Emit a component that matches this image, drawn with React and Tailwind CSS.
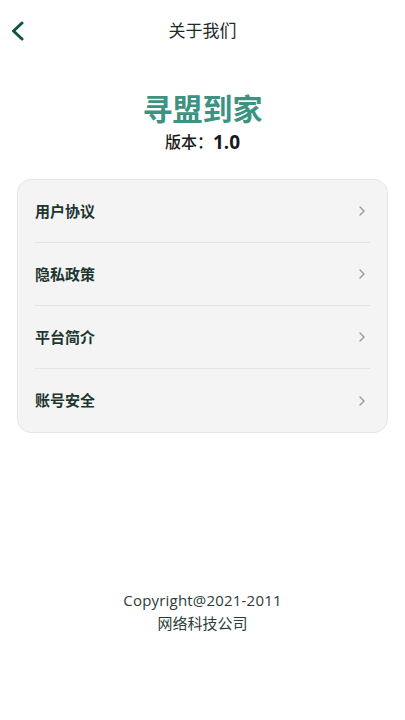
import React from "react";

const items = ["用户协议", "隐私政策", "平台简介", "账号安全"];

function Chevron() {
  return (
    <svg width="8" height="12" viewBox="0 0 8 12" fill="none">
      <path d="M2 2l4 4-4 4" stroke="#9a9a9a" strokeWidth="1.4" strokeLinecap="round" strokeLinejoin="round" />
    </svg>
  );
}

export default function App() {
  return (
    <div
      className="w-[405px] h-[720px] bg-white flex flex-col"
      style={{ fontFamily: '"Noto Sans", "Noto Sans CJK SC", sans-serif' }}
    >
      <div className="relative h-[60px] flex items-center justify-center">
        <button className="absolute left-[8px] top-[20px] w-[18px] h-[22px] flex items-center justify-center">
          <svg width="15" height="20" viewBox="0 0 15 20" fill="none">
            <path d="M12 2L3.5 10l8.5 8" stroke="#0f5346" strokeWidth="3" strokeLinecap="round" strokeLinejoin="round" />
          </svg>
        </button>
        <span className="text-[17px] text-[#1d2a26] leading-none">关于我们</span>
      </div>

      <div className="flex flex-col items-center mt-[30px]">
        <div className="text-[30px] font-bold text-[#3d9282] leading-[38px]">寻盟到家</div>
        <div className="flex items-center mt-[2px] text-[#1a1a1a] leading-[24px]">
          <span className="text-[16px] font-medium">版本：</span>
          <span className="text-[19px] font-bold" style={{ fontFamily: '"Open Sans", sans-serif' }}>1.0</span>
        </div>
      </div>

      <div className="mx-[17px] mt-[25px] rounded-[14px] bg-[#f4f4f4] border border-[#e6e6e6] px-[17px]">
        {items.map((t, i) => (
          <div
            key={t}
            className={`h-[63px] flex items-center justify-between pr-[4px] ${i < items.length - 1 ? "border-b border-[#e3e3e3]" : ""}`}
          >
            <span className="text-[15px] font-semibold text-[#1d3630]">{t}</span>
            <Chevron />
          </div>
        ))}
      </div>

      <div className="flex-1" />

      <div className="flex flex-col items-center mb-[86px] text-[#2a3d38]">
        <div className="text-[15px] leading-[22px]" style={{ fontFamily: '"Open Sans", sans-serif', letterSpacing: "0.2px" }}>
          Copyright@2021-2011
        </div>
        <div className="text-[15px] leading-[22px] mt-[1px]">网络科技公司</div>
      </div>
    </div>
  );
}
